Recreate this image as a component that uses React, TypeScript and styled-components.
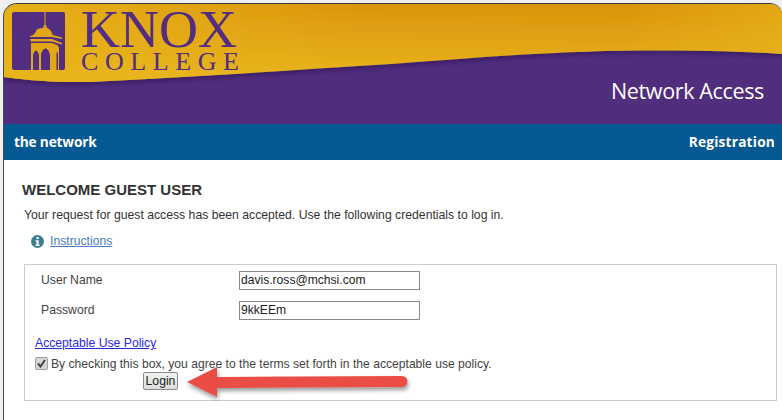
import React from "react";
import styled, { createGlobalStyle } from "styled-components";

const Global = createGlobalStyle`
  html, body { margin: 0; padding: 0; background: #f0f0f0; }
  body { width: 782px; height: 420px; overflow: hidden; font-family: "Liberation Sans", Arial, sans-serif; }
`;

const Frame = styled.div`
  margin: 3px 0 0 3px;
  width: 779px;
  height: 417px;
  box-sizing: border-box;
  background: #fff;
  border-top: 1px solid #3a3a3a;
  border-left: 1px solid #4a4a4a;
  border-top-left-radius: 14px;
  border-top-right-radius: 12px;
  overflow: hidden;
  position: relative;
`;

const Header = styled.header`
  position: relative;
  height: 120px;
  background: #512d7e;
  display: flex;
  justify-content: space-between;
`;

const HeaderArt = styled.svg`
  position: absolute;
  left: 0;
  top: 0;
`;

const Logo = styled.svg`
  position: relative;
  margin: 8px 0 0 8px;
  overflow: visible;
`;

const HeaderTitle = styled.div`
  position: relative;
  align-self: flex-end;
  margin: 0 18px 20px 0;
  color: #fff;
  font: 21.5px/26px "Open Sans", sans-serif;
  letter-spacing: -0.35px;
`;

const NavBar = styled.nav`
  height: 36px;
  background: #045992;
  display: flex;
  justify-content: space-between;
  align-items: center;
  padding: 0 7px 2px 10px;
  box-sizing: border-box;
  color: #fff;
  font: bold 13.7px "Open Sans", sans-serif;
`;

const NavItem = styled.span<{ $spacing: string }>`
  letter-spacing: ${(p) => p.$spacing};
`;

const Content = styled.main`
  padding: 21px 5px 0 18px;
`;

const Title = styled.h1`
  margin: 0;
  color: #333;
  font: bold 15px/18px "Liberation Sans", sans-serif;
`;

const Intro = styled.p`
  margin: 9px 0 0 2px;
  color: #333;
  font-size: 12.23px;
  line-height: 14px;
`;

const HelpRow = styled.div`
  display: flex;
  align-items: center;
  gap: 6px;
  margin: 12px 0 0 9px;
  height: 15px;
`;

const HelpLink = styled.a`
  color: #4a7ec8;
  font-size: 12.2px;
  text-decoration: underline;
  position: relative;
  top: -1px;
`;

const Box = styled.section`
  margin: 15px 0 0 2px;
  height: 137px;
  box-sizing: border-box;
  border: 1px solid #ccc;
  padding: 5px 10px 0;
`;

const Field = styled.div`
  display: grid;
  grid-template-columns: 198px 181px;
  align-items: center;
  height: 20px;
  margin-bottom: 10px;
  padding-left: 6px;
`;

const FieldLabel = styled.label`
  color: #444;
  font-size: 12.2px;
`;

const TextInput = styled.input`
  width: 181px;
  height: 19px;
  box-sizing: border-box;
  border: 1px solid #8a8a8a;
  padding: 0 1px;
  color: #222;
  font: 12.1px "Liberation Sans", sans-serif;
  background: #fff;
`;

const PolicyLink = styled.a`
  display: block;
  margin-top: 16px;
  color: #2a2ae0;
  font-size: 12.2px;
  line-height: 14px;
  text-decoration: underline;
`;

const AgreeRow = styled.div`
  display: flex;
  align-items: flex-start;
  gap: 3px;
  margin-top: 7px;
  color: #444;
  font-size: 12.14px;
  line-height: 14px;
`;

const Check = styled.span`
  width: 13px;
  height: 13px;
  box-sizing: border-box;
  border: 1px solid #a0a0a0;
  border-radius: 2px;
  background: #d6d6d6;
  display: flex;
  align-items: center;
  justify-content: center;
  flex: none;
`;

const LoginButton = styled.button`
  display: block;
  width: 35px;
  height: 18px;
  margin: 1px 0 0 108px;
  padding: 0;
  box-sizing: border-box;
  border: 1px solid #8a8a8a;
  border-radius: 2px;
  background: linear-gradient(#f2f2f2, #dddddd);
  color: #222;
  font: 12.2px "Liberation Sans", sans-serif;
`;

const ArrowArt = styled.svg`
  position: absolute;
  left: 176px;
  top: 355px;
  overflow: visible;
`;

const WAVE =
  "M0 0 H779 V50 C 740 47 690 46 637 46.5 C 550 47 470 54 387 60 C 290 66 190 73 85 78 C 55 78.5 30 77 0 73 Z";

const App = () => (
  <>
    <Global />
    <Frame>
      <Header>
        <HeaderArt width="779" height="120" viewBox="0 0 779 120">
          <defs>
            <linearGradient id="gold" x1="0.55" y1="0" x2="0.45" y2="1">
              <stop offset="0" stopColor="#db950e" />
              <stop offset="1" stopColor="#e9b61d" />
            </linearGradient>
            <linearGradient id="gold2" x1="0" y1="0" x2="1" y2="0">
              <stop offset="0" stopColor="#e8b41a" stopOpacity="0.85" />
              <stop offset="0.45" stopColor="#e8b41a" stopOpacity="0" />
              <stop offset="0.8" stopColor="#e8b41a" stopOpacity="0" />
              <stop offset="1" stopColor="#e8b41a" stopOpacity="0.6" />
            </linearGradient>
            <filter id="waveShadow" x="-5%" y="-5%" width="110%" height="130%">
              <feDropShadow dx="0" dy="1" stdDeviation="3" floodColor="#1f0f3a" floodOpacity="0.7" />
            </filter>
          </defs>
          <path d={WAVE} fill="url(#gold)" filter="url(#waveShadow)" />
          <path d={WAVE} fill="url(#gold2)" />
        </HeaderArt>
        <Logo width="240" height="60" viewBox="0 0 240 60">
          <rect x="0" y="0" width="53" height="58" rx="2" fill="#522d80" />
          <g fill="#e3a716">
            <rect x="32.5" y="0" width="1" height="13" />
            <path d="M32 13 H34 L35 16 C 38 17 40 20 40.5 23 L50 25.5 V27 L40 25 H18 L18 24 C 22 23.5 24 20 24.5 18 C 26 16.5 29 16 31 16 Z" />
            <path d="M18 27 H40 L50 31 V32.5 L40 29.5 H19 Z" />
            <path d="M19 31 H40 L46 33.5 V35 H19 Z" />
            <path fillRule="evenodd" d="M19 35 H47 V58 H19 Z M21 58 H27 V44 C 27 41 25 38.5 24 38.5 C 23 38.5 21 41 21 44 Z M29 58 H38 V44 C 38 39 35 36.5 33.5 36.5 C 32 36.5 29 39 29 44 Z M44.5 58 H46 V44 C 46 41 45.5 40 45 40 C 44.6 40 44.5 41 44.5 44 Z" />
          </g>
          <g fill="#522d80">
            <text x="69" y="34.5" fontFamily="'Liberation Serif', serif" fontSize="52" textLength="156" lengthAdjust="spacingAndGlyphs">KNOX</text>
            <text x="69" y="58" fontFamily="'Liberation Serif', serif" fontSize="26" textLength="158" lengthAdjust="spacing">COLLEGE</text>
          </g>
        </Logo>
        <HeaderTitle>Network Access</HeaderTitle>
      </Header>
      <NavBar>
        <NavItem $spacing="-0.18px">the network</NavItem>
        <NavItem $spacing="0.2px">Registration</NavItem>
      </NavBar>
      <Content>
        <Title>WELCOME GUEST USER</Title>
        <Intro>Your request for guest access has been accepted. Use the following credentials to log in.</Intro>
        <HelpRow>
          <svg width="13" height="13" viewBox="0 0 13 13">
            <circle cx="6.5" cy="6.5" r="6.5" fill="#3f7c94" />
            <rect x="5.5" y="2" width="2.2" height="2" fill="#fff" />
            <path d="M4.5 5.2 H7.7 V9.8 H8.7 V11 H4.5 V9.8 H5.5 V6.4 H4.5 Z" fill="#fff" />
          </svg>
          <HelpLink href="#">Instructions</HelpLink>
        </HelpRow>
        <Box>
          <Field>
            <FieldLabel>User Name</FieldLabel>
            <TextInput readOnly value="davis.ross@mchsi.com" />
          </Field>
          <Field>
            <FieldLabel>Password</FieldLabel>
            <TextInput readOnly value="9kkEEm" />
          </Field>
          <PolicyLink href="#">Acceptable Use Policy</PolicyLink>
          <AgreeRow>
            <Check>
              <svg width="9" height="9" viewBox="0 0 9 9">
                <path d="M1 4.5 L3.5 7.5 L8 1" fill="none" stroke="#444" strokeWidth="2" />
              </svg>
            </Check>
            <span>By checking this box, you agree to the terms set forth in the acceptable use policy.</span>
          </AgreeRow>
          <LoginButton>Login</LoginButton>
        </Box>
      </Content>
      <ArrowArt width="235" height="36" viewBox="0 0 235 36">
        <defs>
          <filter id="sh" x="-10%" y="-30%" width="120%" height="170%">
            <feDropShadow dx="1" dy="3" stdDeviation="2" floodColor="#000" floodOpacity="0.4" />
          </filter>
        </defs>
        <path d="M7 23 L37 8 L37 18 L222 17 A5.5 5.5 0 0 1 222 28 L37 29 L37 38 Z" fill="#ea4d45" filter="url(#sh)" />
      </ArrowArt>
    </Frame>
  </>
);

export default App;
